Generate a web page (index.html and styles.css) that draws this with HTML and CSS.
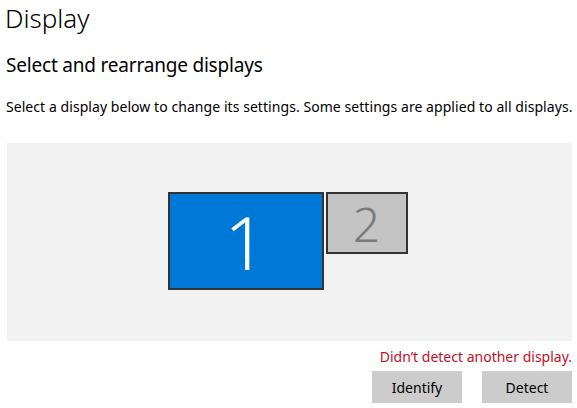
FILE: index.html
```html
<!DOCTYPE html>
<html>
<head>
<meta charset="utf-8">
<link rel="stylesheet" href="styles.css">
</head>
<body>
<div class="page">
  <h1 class="title">Display</h1>
  <h2 class="subtitle">Select and rearrange displays</h2>
  <p class="desc">Select a display below to change its settings. Some settings are applied to all displays.</p>
  <div class="arrange">
    <div class="monitors">
      <div class="mon mon-1">1</div>
      <div class="mon mon-2">2</div>
    </div>
  </div>
  <div class="status">Didn’t detect another display.</div>
  <div class="actions">
    <button class="btn">Identify</button>
    <button class="btn">Detect</button>
  </div>
</div>
</body>
</html>
```
FILE: styles.css
```css
html, body {
  margin: 0;
  padding: 0;
  background: #ffffff;
}
body {
  font-family: "Noto Sans", "Open Sans", sans-serif;
  color: #000;
  width: 577px;
  height: 408px;
  overflow: hidden;
}
.page {
  padding: 0 5px 0 7px;
  display: flex;
  flex-direction: column;
}
.title {
  margin: 0;
  font-weight: 300;
  font-size: 26px;
  line-height: 36px;
  margin-left: -2px;
  height: 36px;
}
.subtitle {
  margin: 16px 0 0 -1px;
  font-weight: 400;
  font-size: 19px;
  letter-spacing: -0.2px;
  line-height: 26px;
}
.desc {
  margin: 19px 0 0 -1px;
  font-size: 14px;
  letter-spacing: 0.06px;
  line-height: 20px;
  white-space: nowrap;
}
.arrange {
  margin-top: 26px;
  height: 198px;
  background: #f2f2f2;
  display: flex;
  align-items: center;
  justify-content: center;
}
.monitors {
  display: flex;
  align-items: flex-start;
  gap: 2px;
  margin: -2px 0 0 -4px;
}
.mon {
  box-sizing: border-box;
  border: 2px solid #333333;
  display: flex;
  align-items: center;
  justify-content: center;
  font-weight: 300;
}
.mon-1 {
  width: 156px;
  height: 98px;
  background: #0078d7;
  color: #ffffff;
  font-size: 74px;
}
.mon-2 {
  width: 82px;
  height: 62px;
  background: #c4c4c4;
  color: #7a7a7a;
  font-size: 48px;
}
.status {
  margin-top: 6px;
  text-align: right;
  color: #c50f1f;
  font-size: 14px;
  line-height: 20px;
}
.actions {
  margin-top: 4px;
  display: flex;
  justify-content: flex-end;
  gap: 20px;
}
.btn {
  width: 90px;
  height: 32px;
  border: none;
  background: #cccccc;
  font-family: inherit;
  font-size: 14px;
  color: #000;
  padding: 0;
}
```
